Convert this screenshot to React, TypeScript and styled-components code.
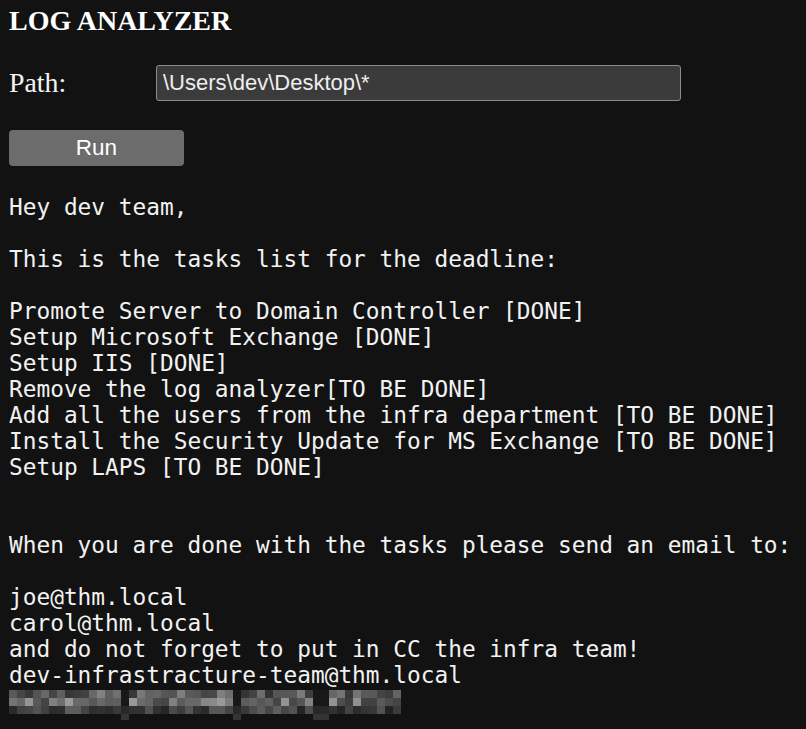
import React from "react";
import styled, { createGlobalStyle } from "styled-components";

const Global = createGlobalStyle`
  html, body { margin: 0; padding: 0; background: #121212; }
  body { color: #f2f2f2; }
`;

const Page = styled.div`
  display: flex;
  flex-direction: column;
  align-items: flex-start;
  padding: 5px 9px 0 9px;
  min-height: 724px;
  background: #121212;
`;

const Title = styled.h1`
  margin: 0;
  font-family: "Liberation Serif", "Times New Roman", serif;
  font-weight: bold;
  font-size: 28px;
  line-height: 31px;
  color: #ffffff;
`;

const FormRow = styled.div`
  display: flex;
  align-items: center;
  margin-top: 29px;
`;

const Label = styled.label`
  width: 147px;
  font-family: "Liberation Serif", "Times New Roman", serif;
  font-size: 27.8px;
  color: #f4f4f4;
`;

const PathInput = styled.input`
  box-sizing: border-box;
  width: 525px;
  height: 36px;
  padding: 0 6px;
  background: #3b3b3b;
  border: 1px solid #8c8c8c;
  border-radius: 3px;
  color: #eeeeee;
  font-family: "Liberation Sans", Arial, sans-serif;
  font-size: 22px;
  outline: none;
`;

const RunButton = styled.button`
  margin-top: 29px;
  width: 175px;
  height: 36px;
  background: #6c6c6c;
  border: none;
  border-radius: 4px;
  color: #ffffff;
  font-family: "Liberation Sans", Arial, sans-serif;
  font-size: 22.5px;
  padding: 0;
`;

const Output = styled.pre`
  margin: 28px 0 0 0;
  font-family: "DejaVu Sans Mono", monospace;
  font-size: 22.8px;
  line-height: 26px;
  color: #f2f2f2;
  white-space: pre;
`;

const Mosaic = styled.svg`
  display: block;
  margin-top: 2px;
`;

const text = `Hey dev team,

This is the tasks list for the deadline:

Promote Server to Domain Controller [DONE]
Setup Microsoft Exchange [DONE]
Setup IIS [DONE]
Remove the log analyzer[TO BE DONE]
Add all the users from the infra department [TO BE DONE]
Install the Security Update for MS Exchange [TO BE DONE]
Setup LAPS [TO BE DONE]


When you are done with the tasks please send an email to:

joe@thm.local
carol@thm.local
and do not forget to put in CC the infra team!
dev-infrastracture-team@thm.local`;

function buildCells() {
  const cells: { x: number; y: number; c: string }[] = [];
  let seed = 7;
  const rnd = () => {
    seed = (seed * 9301 + 49297) % 233280;
    return seed / 233280;
  };
  const gaps = [[109, 121], [221, 234], [308, 320]];
  const cols = 49;
  for (let i = 0; i < cols; i++) {
    const x = i * 8;
    const inGap = gaps.some(([a, b]) => x + 4 >= a && x + 4 <= b);
    for (let r = 0; r < 3; r++) {
      let base: number;
      if (inGap) {
        base = r === 2 ? 40 : 24;
      } else if (r === 0) base = 50 + rnd() * 80;
      else if (r === 1) base = 60 + rnd() * 100;
      else base = 35 + rnd() * 60;
      const v = Math.round(base);
      cells.push({ x, y: r * 8, c: `rgb(${v},${v},${v})` });
    }
    if (inGap) {
      cells.push({ x, y: 24, c: "rgb(52,52,52)" });
    }
  }
  return cells;
}

const cells = buildCells();

export default function App() {
  return (
    <>
      <Global />
      <Page>
        <Title>LOG ANALYZER</Title>
        <FormRow>
          <Label>Path:</Label>
          <PathInput defaultValue={"\\Users\\dev\\Desktop\\*"} />
        </FormRow>
        <RunButton>Run</RunButton>
        <Output>{text}</Output>
        <Mosaic width="396" height="30" viewBox="0 0 396 30">
          {cells.map((c, i) => (
            <rect key={i} x={c.x} y={c.y} width="8" height="8" fill={c.c} />
          ))}
        </Mosaic>
      </Page>
    </>
  );
}
